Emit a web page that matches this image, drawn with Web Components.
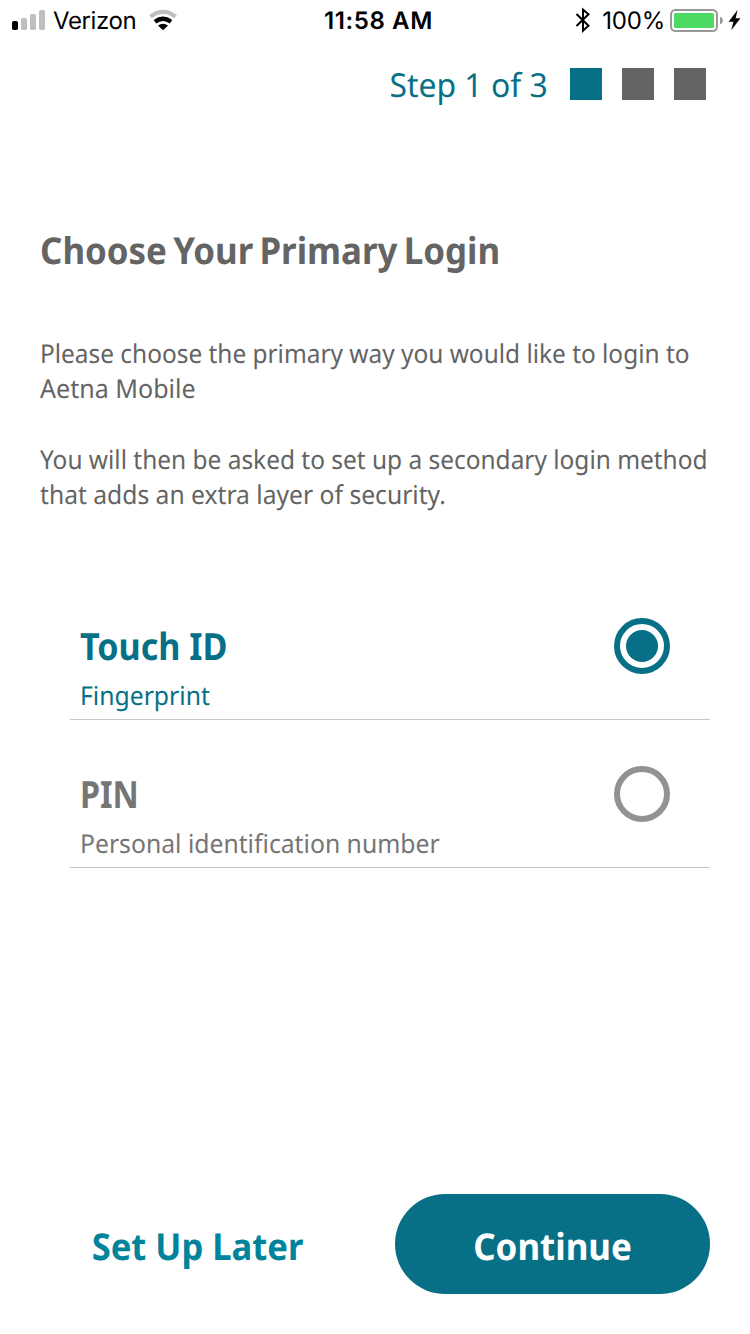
<!DOCTYPE html>
<html lang="en"><head><meta charset="utf-8"><title>Primary Login</title>
<style>
html,body{margin:0;background:#fff}
body{font-family:"Noto Sans",sans-serif;color:#646464;text-rendering:geometricPrecision}
</style></head><body>
<login-setup></login-setup>
<script>
const define=(name,html)=>{
  const t=document.createElement('template');t.innerHTML=html;
  customElements.define(name,class extends HTMLElement{
    constructor(){super();this.attachShadow({mode:'open'}).append(t.content.cloneNode(true));}
  });
};
define('status-bar',`<style>
:host{display:grid;grid-template-columns:1fr auto 1fr;height:41px;align-items:center;color:#000;font:24px/41px Inter,sans-serif;white-space:nowrap}
.l,.r{display:flex;align-items:center}.r{justify-content:flex-end}
svg{display:block;flex:none}
.carrier{margin:0 13px 0 7px;letter-spacing:-.4px}
.time{font-weight:600;padding-left:7px;letter-spacing:.6px}
.pct{margin:0 5px 0 12px;letter-spacing:-.2px}
</style>
<div class="l"><svg width="46" height="41"><rect x="12" y="21" width="6" height="9" rx="1.8"/><g fill="#bfbfbf"><rect x="21" y="18" width="6" height="12" rx="1.8"/><rect x="30" y="14" width="6" height="16" rx="1.8"/><rect x="39" y="10" width="6" height="20" rx="1.8"/></g></svg>
<span class="carrier">Verizon</span>
<svg width="28" height="41" viewBox="0 0 28 41"><g fill="none" stroke-width="4"><path d="M1.400 16.700Q14 7 26.600 16.700" stroke="#bfbfbf"/><path d="M6 21.800Q14 15.800 22 21.800" stroke="#000" stroke-width="4.300"/></g><path d="M9 25.600Q14 22 19 25.600L14 30.200Z"/></svg></div>
<span class="time">11:58 AM</span>
<div class="r"><svg width="16" height="41" viewBox="0 0 16 41"><path d="M2.500 14L14.500 25.800 9 30.800V9.700L14.500 14.300 2.500 26" fill="none" stroke="#000" stroke-width="2"/></svg>
<span class="pct">100%</span>
<svg width="80" height="41" viewBox="0 0 80 41"><rect x="1" y="10" width="46" height="21" rx="4.500" fill="#fff" stroke="#999" stroke-width="2"/><rect x="4" y="13" width="40" height="15" rx="1.500" fill="#4cd964"/><path d="M50 16.500Q53 18 53 20.500T50 24.500Z" fill="#999"/><path d="M67.500 10L58.600 21.700H63.400L61.200 30.200 70.500 18.300H65.700Z"/></svg></div>`);
define('step-indicator',`<style>
:host{display:flex;height:40px;justify-content:flex-end;align-items:center;color:#087086;font-size:33px;line-height:40px;padding:23px 44px 0 0}
span{margin:1px 2px 0 0;transform:scaleX(.967);transform-origin:right}i{width:32px;height:32px;margin-left:20px;background:#646464}i.on{background:#087086}
</style><span><slot></slot></span><i class="on"></i><i></i><i></i>`);
define('intro-copy',`<style>
:host{display:block;padding:121px 0 0 40px;white-space:nowrap}
.h{display:block;font-size:37px;line-height:50px;font-weight:700;margin-bottom:61px;transform:scaleX(.942);transform-origin:left;word-spacing:-3px}
p{margin:0 0 35px;font-size:26px;line-height:35.3px}p span{display:block;transform-origin:left}
.a{transform:scaleX(.939)}.b{transform:scaleX(.964)}.c{transform:scaleX(.94)}.d{transform:scaleX(.948)}
</style><slot class="h" name="title"></slot>
<p><span class="a">Please choose the primary way you would like to login to</span><span class="b">Aetna Mobile</span></p>
<p><span class="c">You will then be asked to set up a secondary login method</span><span class="d">that adds an extra layer of security.</span></p>`);
define('login-option',`<style>
:host{display:flex;box-sizing:border-box;height:148px;margin:0 40px 0 70px;padding:46px 40px 0 10px;justify-content:space-between;align-items:flex-start;border-bottom:1px solid #c7c7c7;color:#757575;white-space:nowrap}
:host([checked]){color:#087086}
.t,.s{display:block;transform-origin:left}
.t{font-size:37.500px;line-height:50px;font-weight:700;margin-top:3px;transform:scaleX(var(--title-scale,.909))}
.s{font-size:26px;line-height:34px;margin-top:7px;transform:scaleX(.951)}
.radio{box-sizing:border-box;width:56px;height:56px;border:6px solid #929292;border-radius:50%;display:grid;place-items:center}
:host([checked]) .radio{border-color:#087086}
:host([checked]) .radio::after{content:"";width:32px;height:32px;border-radius:50%;background:#087086}
</style><div><slot class="t" name="title"></slot><slot class="s"></slot></div><div class="radio"></div>`);
define('action-bar',`<style>
:host{display:flex;height:100px;margin:auto 40px 40px 40px;justify-content:space-between;font-weight:700;font-size:37px;line-height:103px;text-align:center;white-space:nowrap}
.later{width:315px;color:#00849b}.go{width:315px;border-radius:50px;background:#087086;color:#fff}
slot{display:block;transform:scaleX(.934)}.go slot{transform:scaleX(.943)}
</style><div class="later"><slot name="later"></slot></div><div class="go"><slot></slot></div>`);
define('login-setup',`<style>
:host{display:flex;flex-direction:column;height:1334px;width:750px}
.options{display:block;margin-top:25px}
.pin{--title-scale:.86}
</style>
<status-bar></status-bar><step-indicator>Step 1 of 3</step-indicator>
<intro-copy><span slot="title">Choose Your Primary Login</span></intro-copy>
<div class="options"><login-option checked><span slot="title">Touch ID</span>Fingerprint</login-option>
<login-option class="pin"><span slot="title">PIN</span>Personal identification number</login-option></div>
<action-bar><span slot="later">Set Up Later</span>Continue</action-bar>`);
</script></body></html>
